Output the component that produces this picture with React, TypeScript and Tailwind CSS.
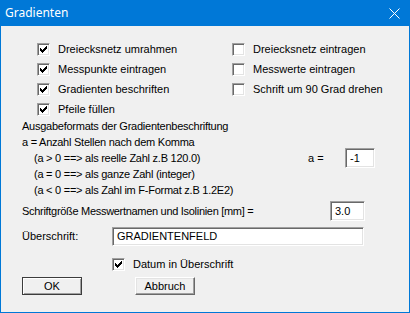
import React from "react";

const sunken =
  "bg-white border border-t-[#a0a0a0] border-l-[#a0a0a0] border-b-white border-r-white shadow-[inset_1px_1px_0_#696969,inset_-1px_-1px_0_#e3e3e3]";

const checkPx = [
  "......X",
  ".....XX",
  "X...XXX",
  "XX.XXX.",
  "XXXXX..",
  ".XXX...",
  "..X....",
];

function Check({ checked }: { checked: boolean }) {
  return (
    <div className={`w-[13px] h-[13px] shrink-0 flex items-center justify-center ${sunken}`}>
      {checked && (
        <svg width="7" height="7" viewBox="0 0 7 7" shapeRendering="crispEdges">
          {checkPx.flatMap((row, y) =>
            row.split("").map((c, x) =>
              c === "X" ? <rect key={`${x}-${y}`} x={x} y={y} width="1" height="1" fill="#000" /> : null
            )
          )}
        </svg>
      )}
    </div>
  );
}

function CheckRow({ checked, label }: { checked: boolean; label: string }) {
  return (
    <div className="flex items-center h-[20px] gap-[8px]">
      <Check checked={checked} />
      <span className="whitespace-nowrap">{label}</span>
    </div>
  );
}

function Btn({ label, def }: { label: string; def?: boolean }) {
  return (
    <div
      className={`w-[60px] h-[18px] flex items-center justify-center bg-[#f0f0f0] ${
        def
          ? "border border-[#3c3c3c] shadow-[inset_1px_1px_0_#ffffff,inset_-1px_-1px_0_#a0a0a0]"
          : "border border-t-white border-l-white border-b-[#696969] border-r-[#696969] shadow-[inset_-1px_-1px_0_#a0a0a0,inset_1px_1px_0_#e3e3e3]"
      }`}
    >
      {label}
    </div>
  );
}

export default function App() {
  return (
    <div
      className="w-[410px] h-[313px] bg-[#f0f0f0] border-l border-r border-b border-[#0078d7] flex flex-col text-black text-[11px] leading-[16px] overflow-hidden"
      style={{ fontFamily: '"Liberation Sans", Arial, sans-serif' }}
    >
      <div className="h-[26px] bg-[#0078d7] flex items-center justify-between pl-[4px] pr-[9px] shrink-0">
        <span className="text-white text-[12px]" style={{ fontFamily: '"Noto Sans", sans-serif' }}>
          Gradienten
        </span>
        <svg width="11" height="11" viewBox="0 0 11 11">
          <path d="M0.5 0.5L10.5 10.5M10.5 0.5L0.5 10.5" stroke="#fff" strokeWidth="1" />
        </svg>
      </div>
      <div className="pl-[21px] flex flex-col">
        <div className="pt-[13px] pl-[15px] grid grid-cols-[195px_1fr]">
          <CheckRow checked label="Dreiecksnetz umrahmen" />
          <CheckRow checked={false} label="Dreiecksnetz eintragen" />
          <CheckRow checked label="Messpunkte eintragen" />
          <CheckRow checked={false} label="Messwerte eintragen" />
          <CheckRow checked label="Gradienten beschriften" />
          <CheckRow checked={false} label="Schrift um 90 Grad drehen" />
          <CheckRow checked label="Pfeile füllen" />
        </div>
        <div className="mt-[-1px] flex flex-col w-[353px] tracking-[-0.25px]">
          <div className="h-[16px]">Ausgabeformats der Gradientenbeschriftung</div>
          <div className="h-[16px]">a = Anzahl Stellen nach dem Komma</div>
          <div className="h-[16px] flex items-center">
            <span className="pl-[12px] flex-1">(a &gt; 0 ==&gt; als reelle Zahl z.B 120.0)</span>
            <span className="w-[37px] tracking-normal">a =</span>
            <div className={`w-[30px] h-[20px] -my-[1px] pl-[4px] flex items-center tracking-normal ${sunken}`}>-1</div>
          </div>
          <div className="h-[16px] pl-[12px]">(a = 0 ==&gt; als ganze Zahl (integer)</div>
          <div className="h-[16px] pl-[12px]">(a &lt; 0 ==&gt; als Zahl im F-Format z.B 1.2E2)</div>
        </div>
        <div className="mt-[3px] h-[20px] w-[343px] flex items-center justify-between">
          <span className="tracking-[-0.3px]">Schriftgröße Messwertnamen und Isolinien [mm] =</span>
          <div className={`w-[35px] h-[20px] pl-[4px] flex items-center ${sunken}`}>3.0</div>
        </div>
        <div className="mt-[5px] h-[20px] flex items-center">
          <span className="w-[90px]">Überschrift:</span>
          <div className={`w-[252px] h-[19px] pl-[4px] flex items-center ${sunken}`}>GRADIENTENFELD</div>
        </div>
        <div className="mt-[8px] pl-[90px]">
          <CheckRow checked label="Datum in Überschrift" />
        </div>
        <div className="mt-[3px] flex gap-[53px]">
          <Btn label="OK" def />
          <Btn label="Abbruch" />
        </div>
      </div>
    </div>
  );
}
